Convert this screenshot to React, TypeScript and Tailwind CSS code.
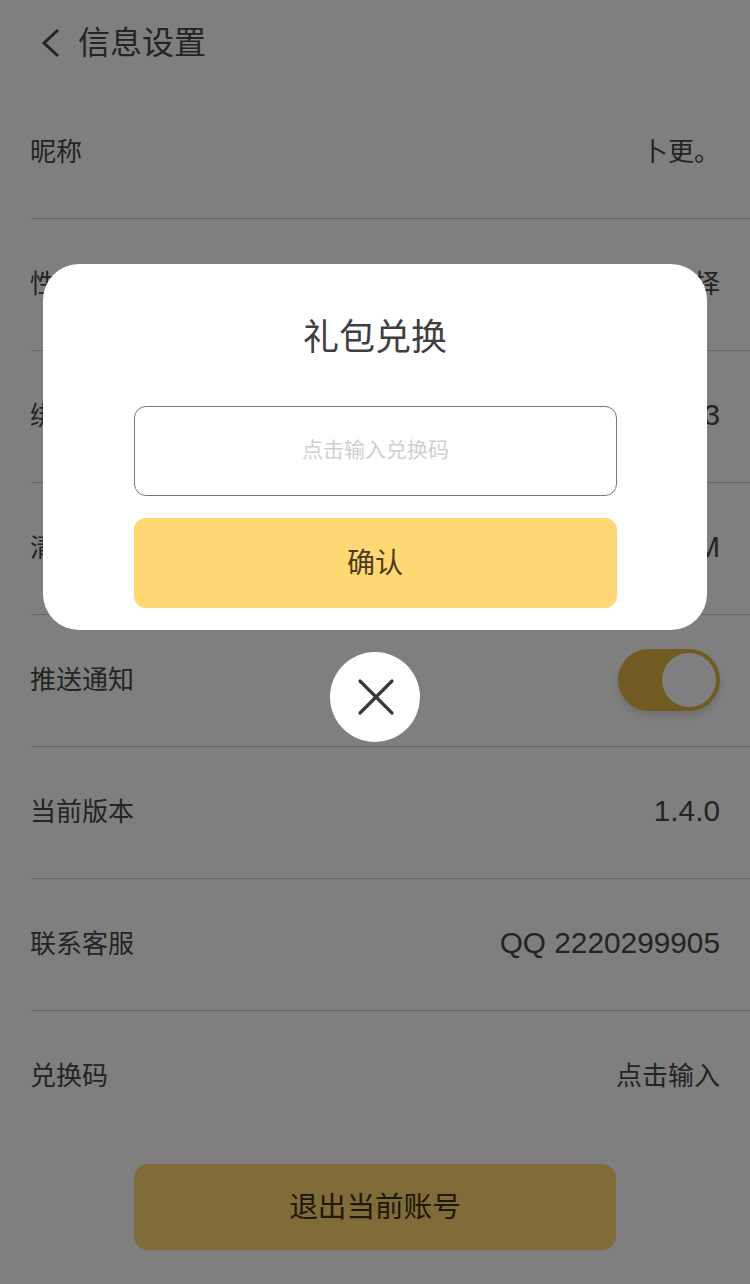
import { X } from 'lucide-react';

const rows = [
  { label: '昵称', value: '卜更。' },
  { label: '性别', value: '请选择' },
  { label: '绑定手机', value: '3', latin: true },
  { label: '清除缓存', value: 'M', latin: true },
  { label: '推送通知', toggle: true },
  { label: '当前版本', value: '1.4.0', latin: true },
  { label: '联系客服', value: 'QQ 2220299905', latin: true },
  { label: '兑换码', value: '点击输入' },
];

function Toggle() {
  return (
    <div className="mb-[2px] flex h-[62px] w-[102px] items-center justify-end rounded-full bg-[#e2b744] pr-[4px] shadow-[0_4px_8px_rgba(0,0,0,0.15)]">
      <div className="h-[54px] w-[54px] rounded-full bg-white" />
    </div>
  );
}

export default function App() {
  return (
    <div className="relative h-[1284px] w-[750px] overflow-hidden bg-white font-['Liberation_Sans','Noto_Sans_CJK_SC',sans-serif] text-[#484848]">
      <header className="flex h-[87px] items-center pb-px pl-[38px]">
        <svg className="h-[32px] w-[24px]" viewBox="0 0 24 32" fill="none" stroke="currentColor" strokeWidth="3">
          <path d="M20 3 L6 16 L20 29" />
        </svg>
        <h1 className="ml-[16px] text-[32px] leading-none">信息设置</h1>
      </header>

      <div>
        {rows.map((row, i) => (
          <div
            key={row.label}
            className={
              i < rows.length - 1
                ? 'ml-[31px] flex h-[132px] items-center justify-between border-b border-[#cdcdcd] pr-[30px]'
                : 'ml-[31px] flex h-[132px] items-center justify-between pr-[30px]'
            }
          >
            <span className="-ml-px pb-px text-[26px]">{row.label}</span>
            {row.toggle ? (
              <Toggle />
            ) : (
              <span className={row.latin ? 'pb-[3px] text-[29.8px]' : 'pb-px text-[26px]'}>{row.value}</span>
            )}
          </div>
        ))}
      </div>

      <div className="mx-auto mt-[21px] flex h-[86px] w-[482px] items-center justify-center rounded-[14px] bg-[#ffd873] text-[28.6px] text-[#403010]">
        退出当前账号
      </div>

      <div className="absolute inset-0 flex flex-col items-center bg-black/50 pt-[264px]">
        <div className="flex h-[366px] w-[664px] flex-col items-center rounded-[36px] bg-white">
          <h2 className="mt-[52px] text-[36px] leading-[44px] text-[#3f3f3f]">礼包兑换</h2>
          <div className="mt-[46px] flex h-[90px] w-[483px] items-center justify-center rounded-[12px] border border-[#777777] pb-[2px] pl-px text-[21px] text-[#cfcfcf]">
            点击输入兑换码
          </div>
          <button className="mt-[22px] h-[90px] w-[483px] rounded-[12px] bg-[#ffd873] pt-px text-[28px] text-[#4a3c1c]">确认</button>
        </div>
        <div className="mt-[22px] flex h-[90px] w-[90px] items-center justify-center rounded-full bg-white">
          <X className="ml-px h-[64px] w-[64px] text-[#3a3a3a]" strokeWidth={1.2} />
        </div>
      </div>
    </div>
  );
}
